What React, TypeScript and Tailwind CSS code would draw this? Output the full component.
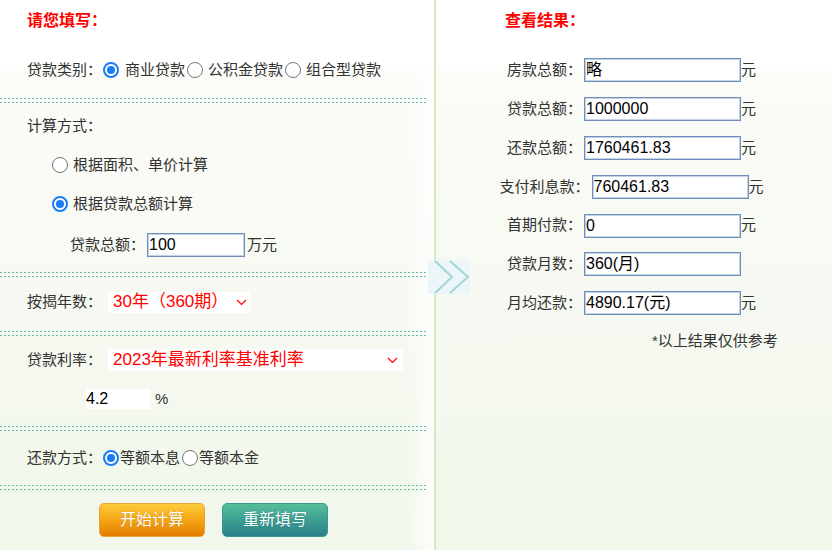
const FONT = "font-['Liberation_Sans','Noto_Sans_CJK_SC',sans-serif]"
const DOTS = 'h-px bg-[repeating-linear-gradient(90deg,#62baa9_0_2px,transparent_2px_4px)]'

function Divider() {
  return (
    <div className="flex flex-col gap-[3px] w-[427px]">
      <div className={DOTS} />
      <div className={DOTS} />
    </div>
  )
}

function Radio({ checked, className = '' }: { checked?: boolean; className?: string }) {
  if (checked) {
    return (
      <span
        className={`w-4 h-4 rounded-full border-2 border-[#1a7bf5] bg-white flex items-center justify-center shrink-0 ${className}`}
      >
        <span className="w-2 h-2 rounded-full bg-[#1a7bf5]" />
      </span>
    )
  }
  return <span className={`w-4 h-4 rounded-full border border-[#767676] bg-white shrink-0 ${className}`} />
}

function Chevron() {
  return (
    <svg width="11" height="7" viewBox="0 0 11 7">
      <polyline points="1,1 5.5,5.5 10,1" fill="none" stroke="#f00" strokeWidth="1.2" />
    </svg>
  )
}

const results = [
  { label: '房款总额：', value: '略', unit: '元' },
  { label: '贷款总额：', value: '1000000', unit: '元' },
  { label: '还款总额：', value: '1760461.83', unit: '元' },
  { label: '支付利息款：', value: '760461.83', unit: '元' },
  { label: '首期付款：', value: '0', unit: '元' },
  { label: '贷款月数：', value: '360(月)', unit: '' },
  { label: '月均还款：', value: '4890.17(元)', unit: '元' },
]

const boxClass =
  'bg-white border border-[#6f8fb8] shadow-[inset_0_0_0_1px_#c3d2e5] px-[1px] text-[16px] text-black outline-none'

export default function App() {
  return (
    <div
      className={`relative w-[832px] h-[550px] flex text-[15px] text-[#333] bg-[linear-gradient(180deg,#ffffff_0px,#ffffff_62px,#fbfbf8_76px,#f1f7ea_550px)] ${FONT}`}
    >
      {/* left: form */}
      <div className="w-[434px] bg-[linear-gradient(90deg,transparent_0,transparent_405px,rgba(255,255,255,0.85)_434px)]">
        <div className="h-[42px] flex items-center pl-[27px] text-[16px] font-bold text-[#f00]">
          请您填写：
        </div>
        <div className="h-[56px] flex items-center pl-[27px]">
          <span>贷款类别：</span>
          <Radio checked className="ml-[1px]" />
          <span className="ml-[6px]">商业贷款</span>
          <Radio className="ml-[2px]" />
          <span className="ml-[5px]">公积金贷款</span>
          <Radio className="ml-[2px]" />
          <span className="ml-[5px]">组合型贷款</span>
        </div>
        <Divider />

        <div className="h-[46px] flex items-center pl-[27px]">计算方式：</div>
        <div className="h-[32px] flex items-center pl-[52px]">
          <Radio />
          <span className="ml-[5px]">根据面积、单价计算</span>
        </div>
        <div className="h-[46px] flex items-center pl-[52px]">
          <Radio checked />
          <span className="ml-[5px]">根据贷款总额计算</span>
        </div>
        <div className="h-[36px] mb-[9px] flex items-center pl-[70px]">
          <span>贷款总额：</span>
          <input readOnly value="100" className={`ml-[2px] w-[98px] h-[24px] ${boxClass}`} />
          <span className="ml-[2px]">万元</span>
        </div>
        <Divider />

        <div className="h-[50px] mb-[4px] flex items-center pl-[27px]">
          <span>按揭年数：</span>
          <div className="ml-[6px] w-[142px] h-[21px] bg-white flex items-center justify-between pl-[5px] pr-[3px] text-[17px] text-[#f00]">
            <span>30年（360期）</span>
            <Chevron />
          </div>
        </div>
        <Divider />

        <div className="h-[48px] flex items-center pl-[27px]">
          <span>贷款利率：</span>
          <div className="ml-[6px] w-[295px] h-[22px] bg-white flex items-center justify-between pl-[5px] pr-[5px] text-[17px] text-[#f00]">
            <span>2023年最新利率基准利率</span>
            <Chevron />
          </div>
        </div>
        <div className="h-[30px] mb-[12px] flex items-center pl-[86px]">
          <div className="w-[64px] h-[20px] bg-white flex items-center text-[16px] text-black">4.2</div>
          <span className="ml-[5px]">%</span>
        </div>
        <Divider />

        <div className="h-[54px] flex items-center pl-[27px]">
          <span>还款方式：</span>
          <Radio checked className="ml-[1px]" />
          <span className="ml-[1px]">等额本息</span>
          <Radio className="ml-[2px]" />
          <span className="ml-[1px]">等额本金</span>
        </div>
        <Divider />

        <div className="mt-[13px] flex gap-[17px] pl-[99px]">
          <button className="w-[106px] h-[34px] rounded-[5px] border border-[#eda232] bg-[linear-gradient(180deg,#fdcb3a,#f4a516_50%,#e37c00)] text-white text-[16px] [text-shadow:0_0_1px_rgba(150,80,0,0.5)]">
            开始计算
          </button>
          <button className="w-[106px] h-[34px] rounded-[5px] border border-[#3b9a8f] bg-[linear-gradient(180deg,#56be99,#3c9f92_50%,#2b7f8b)] text-white text-[16px] [text-shadow:0_0_1px_rgba(0,60,60,0.5)]">
            重新填写
          </button>
        </div>
      </div>

      <div className="w-[2px] bg-[#d5e9c0]" />

      {/* right: results */}
      <div className="flex-1">
        <div className="h-[42px] flex items-center pl-[69px] text-[16px] font-bold text-[#f00]">
          查看结果：
        </div>
        <div className="mt-[9px]">
          {results.map((r) => (
            <div key={r.label} className="h-[38.8px] flex items-center justify-center pr-[5px]">
              <span>{r.label}</span>
              <input readOnly value={r.value} className={`ml-[2px] w-[157px] h-[24px] ${boxClass}`} />
              <span className="w-[15px]">{r.unit}</span>
            </div>
          ))}
        </div>
        <div className="mt-[9px] h-[20px] flex items-center pl-[216px]">*以上结果仅供参考</div>
      </div>

      {/* arrow over the split */}
      <div className="absolute left-[428px] top-[260px] w-[42px] h-[34px] bg-[#ecf6f9]">
        <svg width="42" height="34" viewBox="0 0 42 34">
          <polyline points="7,1 24,17 7,33" fill="none" stroke="#a3d5d2" strokeWidth="2" />
          <polyline points="22,1 40,17 22,33" fill="none" stroke="#a3d5d2" strokeWidth="2" />
        </svg>
      </div>
    </div>
  )
}
